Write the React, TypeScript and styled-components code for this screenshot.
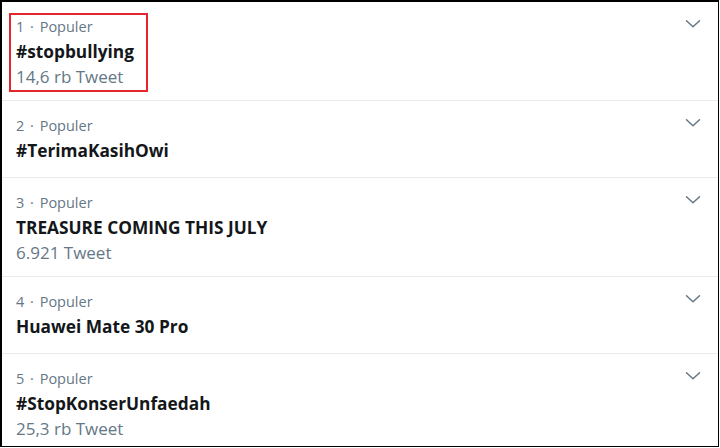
import { FC, ReactElement } from 'react';
import styled, { createGlobalStyle } from 'styled-components';

const GlobalStyle = createGlobalStyle`
    html, body {
        margin: 0;
        padding: 0;
        background: #ffffff;
    }
    body {
        font-family: "Open Sans", "Liberation Sans", sans-serif;
    }
`;

const Frame = styled.div`
    box-sizing: border-box;
    width: 719px;
    height: 447px;
    border: 1px solid #000000;
    border-left-width: 2px;
    border-top-width: 2px;
    background: #ffffff;
    overflow: hidden;
`;

const TrendRow = styled.div<{ $hasCount?: boolean; $last?: boolean }>`
    position: relative;
    box-sizing: border-box;
    display: flex;
    justify-content: space-between;
    align-items: flex-start;
    padding: 14px 4px 0 14px;
    height: ${(p) => (p.$hasCount ? '99px' : '77px')};
    border-bottom: ${(p) => (p.$last ? 'none' : '1px solid #e6ecf0')};
`;

const TrendBody = styled.div`
    display: flex;
    flex-direction: column;
`;

const Meta = styled.div`
    font-size: 14.5px;
    line-height: 22px;
    color: #657786;
`;

const Dot = styled.span`
    margin: 0 2px;
`;

const Name = styled.div`
    font-size: 17.3px;
    font-weight: 700;
    line-height: 28px;
    color: #14171a;
`;

const Count = styled.div`
    font-size: 17px;
    line-height: 22px;
    color: #657786;
`;

const Caret = styled.div`
    padding-top: 3px;
    padding-right: 13px;
    color: #657786;
    display: flex;
`;

const Highlight = styled.div`
    position: absolute;
    left: 7px;
    top: 11px;
    width: 139px;
    height: 79px;
    border: 2px solid #e3262c;
    box-sizing: border-box;
    pointer-events: none;
`;

interface ITrend {
    rank: number;
    name: string;
    count?: string;
}

const trends: ITrend[] = [
    { rank: 1, name: '#stopbullying', count: '14,6 rb Tweet' },
    { rank: 2, name: '#TerimaKasihOwi' },
    { rank: 3, name: 'TREASURE COMING THIS JULY', count: '6.921 Tweet' },
    { rank: 4, name: 'Huawei Mate 30 Pro' },
    { rank: 5, name: '#StopKonserUnfaedah', count: '25,3 rb Tweet' },
];

const Chevron: FC = (): ReactElement => (
    <svg width="16" height="10" viewBox="0 0 16 10" fill="none">
        <path d="M1.5 1.8 L8 7.8 L14.5 1.8" stroke="currentColor" strokeWidth="1.5" strokeLinecap="round" strokeLinejoin="round" />
    </svg>
);

const App: FC = (): ReactElement => {
    return (
        <>
            <GlobalStyle />
            <Frame>
                {trends.map((t, i) => (
                    <TrendRow key={t.rank} $hasCount={!!t.count} $last={i === trends.length - 1}>
                        <TrendBody>
                            <Meta>
                                {t.rank} <Dot>·</Dot> Populer
                            </Meta>
                            <Name>{t.name}</Name>
                            {t.count && <Count>{t.count}</Count>}
                        </TrendBody>
                        <Caret>
                            <Chevron />
                        </Caret>
                        {t.rank === 1 && <Highlight />}
                    </TrendRow>
                ))}
            </Frame>
        </>
    );
};

export default App;
